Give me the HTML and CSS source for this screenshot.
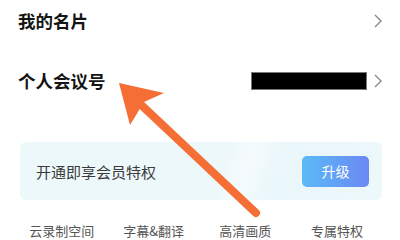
FILE: index.html
```html
<!DOCTYPE html>
<html lang="zh">
<head>
<meta charset="utf-8">
<link rel="stylesheet" href="styles.css">
</head>
<body>
<div class="page">
  <div class="list">
    <div class="row">
      <span class="title">我的名片</span>
      <svg class="chev" width="8" height="14" viewBox="0 0 8 14"><path d="M1 1 L7 7 L1 13" fill="none" stroke="#8a8a8a" stroke-width="1.4"/></svg>
    </div>
    <div class="row">
      <span class="title">个人会议号</span>
      <div class="right">
        <span class="mask"></span>
        <svg class="chev" width="8" height="14" viewBox="0 0 8 14"><path d="M1 1 L7 7 L1 13" fill="none" stroke="#8a8a8a" stroke-width="1.4"/></svg>
      </div>
    </div>
  </div>
  <div class="card">
    <span class="card-text">开通即享会员特权</span>
    <span class="btn">升级</span>
  </div>
  <div class="perks">
    <span>云录制空间</span>
    <span>字幕&amp;翻译</span>
    <span>高清画质</span>
    <span>专属特权</span>
  </div>
  <svg class="arrow" width="400" height="240" viewBox="0 0 400 240">
    <line x1="256" y1="213" x2="136" y2="100" stroke="#f46e36" stroke-width="8" stroke-linecap="round"/>
    <polygon points="119,83 164,93 144,102 130,125" fill="#f46e36"/>
  </svg>
</div>
</body>
</html>
```

FILE: styles.css
```css
* { box-sizing: border-box; }
html, body {
  margin: 0;
  padding: 0;
  background: #ffffff;
}
body {
  font-family: "Noto Sans CJK SC", "Noto Sans", sans-serif;
  width: 400px;
  height: 240px;
  overflow: hidden;
}
.page {
  position: relative;
  width: 400px;
  height: 240px;
}
.list {
  display: flex;
  flex-direction: column;
  gap: 18px;
  padding: 0 18px;
}
.row {
  height: 42px;
  display: flex;
  align-items: center;
  justify-content: space-between;
}
.title {
  font-size: 17.5px;
  font-weight: 700;
  color: #151515;
  line-height: 20px;
}
.right {
  display: flex;
  align-items: center;
  gap: 7px;
}
.mask {
  display: block;
  width: 116px;
  height: 18px;
  background: #000;
  border: 1px solid #777;
}
.chev { display: block; }
.card {
  margin: 40px 0 0 20px;
  width: 362px;
  height: 58px;
  border-radius: 6px;
  background: linear-gradient(110deg, #edf8fb 0%, #edf8fb 55%, #f5fbfd 62%, #e9f6fa 70%, #edf8fb 100%);
  display: flex;
  align-items: center;
  justify-content: space-between;
  padding: 0 13px 0 16px;
}
.card-text {
  font-size: 15px;
  color: #3a3a3a;
  line-height: 20px;
  margin-top: 2px;
}
.btn {
  width: 67px;
  height: 31px;
  border-radius: 5px;
  background: linear-gradient(90deg, #5bbaf8, #6a88f3);
  color: #fff;
  font-size: 14px;
  display: flex;
  align-items: center;
  justify-content: center;
}
.perks {
  display: grid;
  grid-template-columns: repeat(4, 1fr);
  width: 367px;
  margin: 23px 0 0 16px;
  font-size: 13px;
  color: #555;
  line-height: 16px;
  text-align: center;
}
.arrow {
  position: absolute;
  left: 0;
  top: 0;
  pointer-events: none;
}
```
